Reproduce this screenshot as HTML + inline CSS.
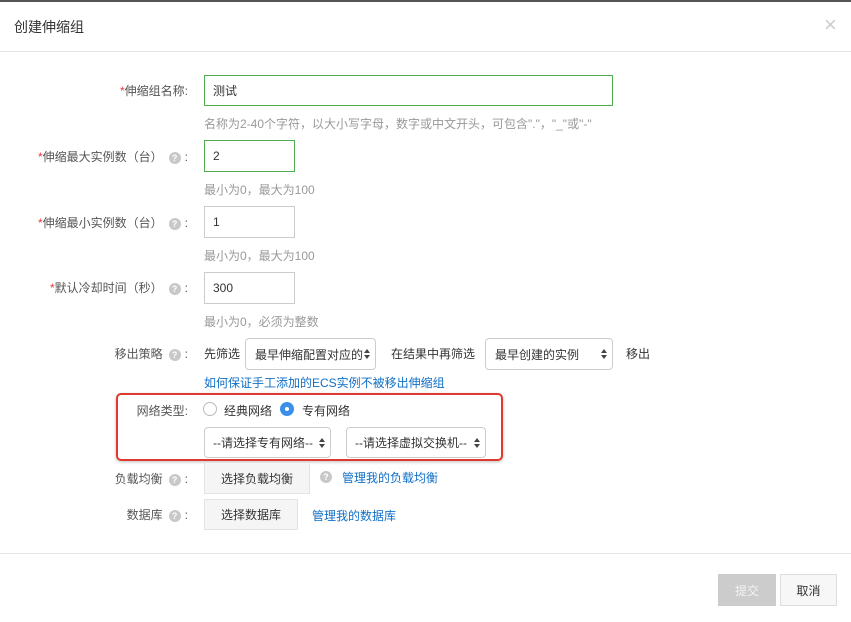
<!DOCTYPE html>
<html><head><meta charset="utf-8"><style>
*{box-sizing:border-box;margin:0;padding:0}
body{width:851px;height:622px;background:#fff;font-family:"Liberation Sans","Noto Sans CJK SC",sans-serif;font-size:12px;color:#333;position:relative;overflow:hidden}
.a{position:absolute;white-space:nowrap}
.lbl{position:absolute;right:663px;white-space:nowrap;color:#555;font-size:12px}
.req{color:#e4393c}
.q{display:inline-block;width:12px;height:12px;border-radius:50%;background:#c8c8c8;color:#fff;font-size:9px;line-height:12px;text-align:center;font-weight:bold;vertical-align:0;margin:0 4px 0 6px}
.inp{position:absolute;border:1px solid #ccc;background:#fff;padding-left:8px;font-size:12px;color:#333;display:flex;align-items:center}
.g{border-color:#4cae4c}
.hint{position:absolute;color:#999;font-size:12px;white-space:nowrap}
.sel{position:absolute;border:1px solid #ccc;border-radius:4px;background:#fff;display:flex;align-items:center;padding-left:9px;font-size:12px;color:#333;overflow:hidden;white-space:nowrap}
.sel:after{content:"";position:absolute;right:5px;top:50%;margin-top:-5px;width:0;height:0;border-left:3px solid transparent;border-right:3px solid transparent;border-bottom:4px solid #444}
.sel:before{content:"";position:absolute;right:5px;top:50%;margin-top:1px;width:0;height:0;border-left:3px solid transparent;border-right:3px solid transparent;border-top:4px solid #444}
.btn{position:absolute;background:#f5f5f5;border:1px solid #e3e3e3;display:flex;align-items:center;justify-content:center;font-size:12px;color:#333}
.lnk{position:absolute;color:#0f6fc6;white-space:nowrap}
</style></head><body>
<div class="a" style="left:0;top:0;width:851px;height:2px;background:#555"></div>
<div class="a" style="left:14px;top:17px;font-size:14px;color:#333">创建伸缩组</div>
<div class="a" style="left:824px;top:12px;font-size:22px;color:#ccc;font-weight:300">×</div>
<div class="a" style="left:0;top:51px;width:851px;height:1px;background:#e5e5e5"></div>

<div class="lbl" style="top:82px"><span class="req">*</span>伸缩组名称:</div>
<div class="inp g" style="left:204px;top:75px;width:409px;height:31px">测试</div>
<div class="hint" style="left:204px;top:115px">名称为2-40个字符，以大小写字母，数字或中文开头，可包含"."，"_"或"-"</div>

<div class="lbl" style="top:148px"><span class="req">*</span>伸缩最大实例数（台）<span class="q">?</span>:</div>
<div class="inp g" style="left:204px;top:140px;width:91px;height:32px">2</div>
<div class="hint" style="left:204px;top:181px">最小为0，最大为100</div>

<div class="lbl" style="top:214px"><span class="req">*</span>伸缩最小实例数（台）<span class="q">?</span>:</div>
<div class="inp" style="left:204px;top:206px;width:91px;height:32px">1</div>
<div class="hint" style="left:204px;top:247px">最小为0，最大为100</div>

<div class="lbl" style="top:279px"><span class="req">*</span>默认冷却时间（秒）<span class="q">?</span>:</div>
<div class="inp" style="left:204px;top:272px;width:91px;height:32px">300</div>
<div class="hint" style="left:204px;top:313px">最小为0，必须为整数</div>

<div class="lbl" style="top:345px">移出策略<span class="q">?</span>:</div>
<div class="a" style="left:204px;top:345px">先筛选</div>
<div class="sel" style="left:245px;top:338px;width:131px;height:32px;padding-right:16px">最早伸缩配置对应的</div>
<div class="a" style="left:391px;top:345px">在结果中再筛选</div>
<div class="sel" style="left:485px;top:338px;width:128px;height:32px">最早创建的实例</div>
<div class="a" style="left:626px;top:345px">移出</div>
<div class="lnk" style="left:204px;top:374px">如何保证手工添加的ECS实例不被移出伸缩组</div>

<div class="a" style="left:116px;top:393px;width:387px;height:68px;border:2px solid #e0392f;border-radius:5px;box-shadow:0 1px 3px rgba(0,0,0,.25)"></div>
<div class="lbl" style="top:402px">网络类型:</div>
<div class="a" style="left:203px;top:402px;width:14px;height:14px;border:1px solid #bbb;border-radius:50%"></div>
<div class="a" style="left:224px;top:402px">经典网络</div>
<div class="a" style="left:280px;top:402px;width:14px;height:14px;background:#3c8fe8;border-radius:50%"><div style="position:absolute;left:5px;top:5px;width:4px;height:4px;background:#fff;border-radius:50%"></div></div>
<div class="a" style="left:302px;top:402px">专有网络</div>
<div class="sel" style="left:204px;top:427px;width:127px;height:31px;padding-left:8px">--请选择专有网络--</div>
<div class="sel" style="left:346px;top:427px;width:140px;height:31px;padding-left:8px">--请选择虚拟交换机--</div>

<div class="lbl" style="top:470px">负载均衡<span class="q">?</span>:</div>
<div class="btn" style="left:204px;top:462px;width:106px;height:32px">选择负载均衡</div>
<span class="q a" style="left:314px;top:471px">?</span>
<div class="lnk" style="left:342px;top:469px">管理我的负载均衡</div>

<div class="lbl" style="top:506px">数据库<span class="q">?</span>:</div>
<div class="btn" style="left:204px;top:499px;width:94px;height:31px">选择数据库</div>
<div class="lnk" style="left:312px;top:507px">管理我的数据库</div>

<div class="a" style="left:0;top:553px;width:851px;height:1px;background:#e5e5e5"></div>
<div class="btn" style="left:718px;top:574px;width:58px;height:32px;background:#ccc;border-color:#ccc;color:#f3f3f3">提交</div>
<div class="btn" style="left:780px;top:574px;width:57px;height:32px;background:#f7f7f7;border-color:#ddd">取消</div>
</body></html>
